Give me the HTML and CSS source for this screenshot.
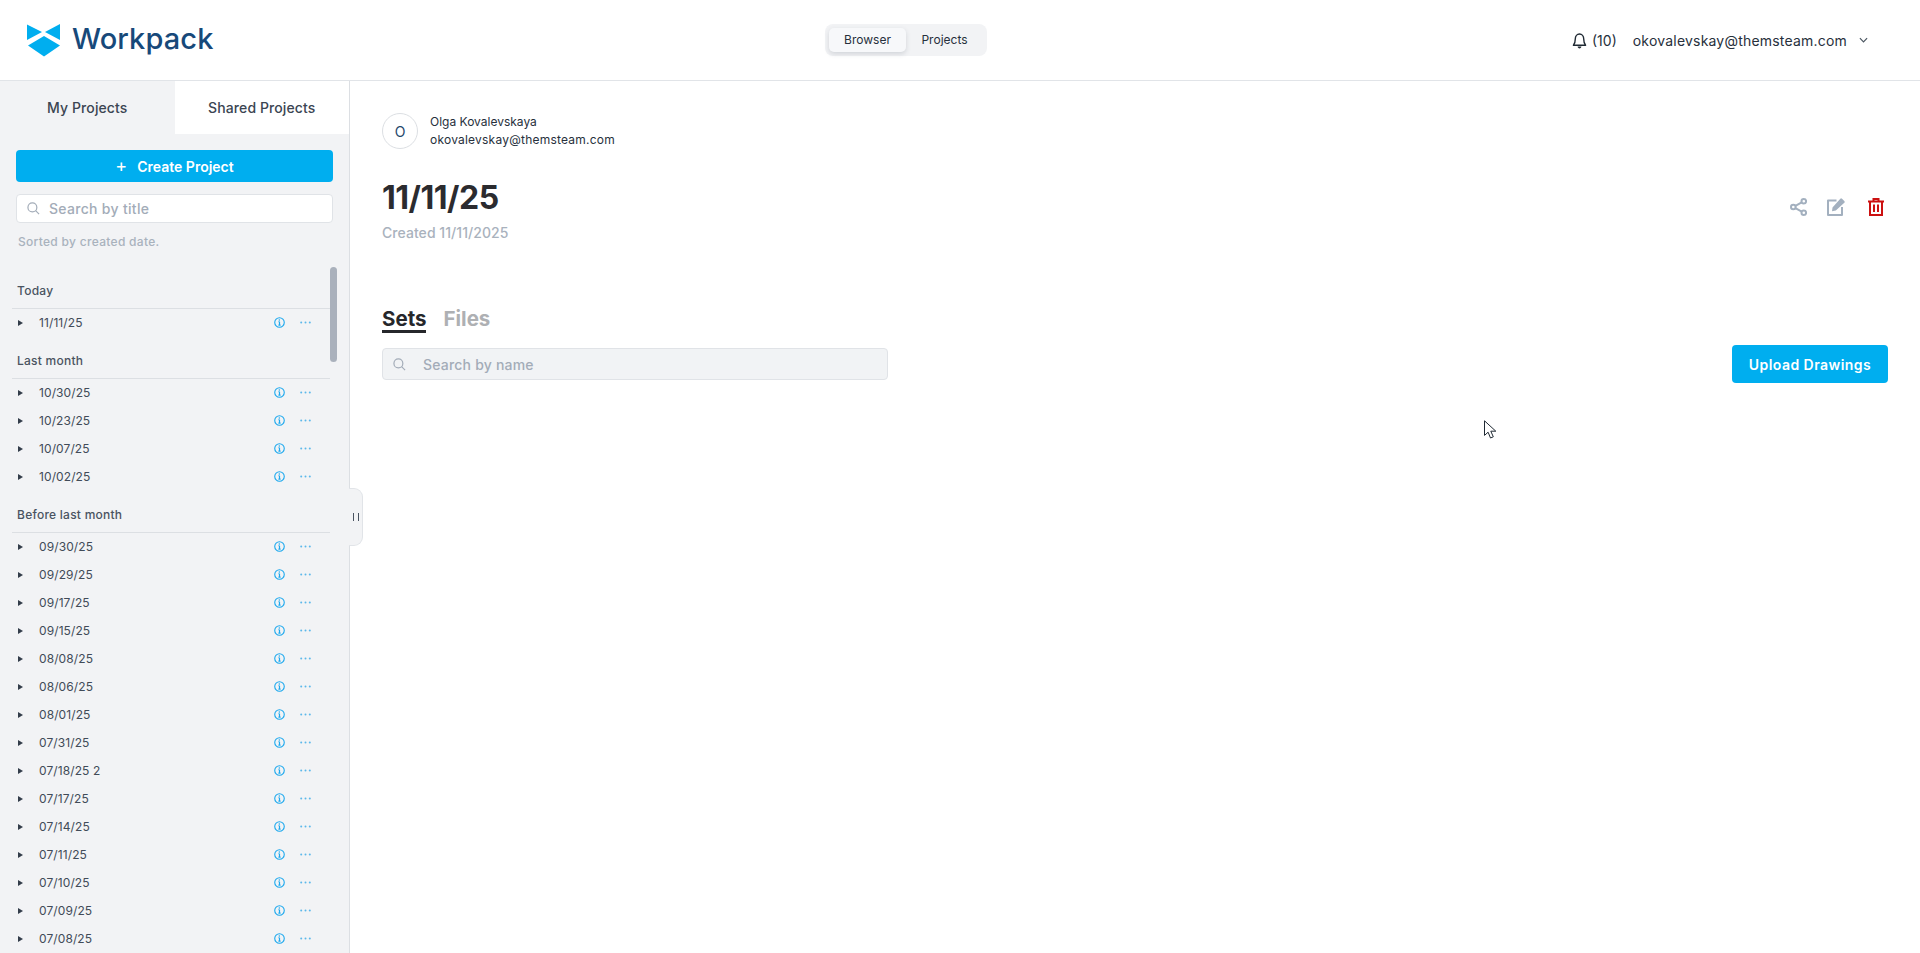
FILE: index.html
```html
<!DOCTYPE html>
<html lang="en">
<head>
<meta charset="utf-8">
<title>Workpack</title>
<link rel="stylesheet" href="styles.css">
</head>
<body>
<svg class="defs" width="0" height="0">
  <symbol id="i-info" viewBox="0 0 12 12"><circle cx="6" cy="6" r="5.200" fill="none" stroke="#1ca8ee" stroke-width="1.200"/><path stroke="#1ca8ee" stroke-width="1.300" d="M6 5.200v3.600M4.800 8.800h2.400M4.800 5.200H6"/><circle cx="5.800" cy="3.300" r=".8" fill="#1ca8ee"/></symbol>
  <symbol id="i-dots" viewBox="0 0 11 3"><g fill="#5cb8ea"><circle cx="1.200" cy="1.500" r="1"/><circle cx="5.500" cy="1.500" r="1"/><circle cx="9.800" cy="1.500" r="1"/></g></symbol>
  <symbol id="i-glass" viewBox="0 0 14 14"><circle cx="5.800" cy="5.800" r="4.800" fill="none" stroke="#a3acb8" stroke-width="1.300"/><path stroke="#a3acb8" stroke-width="1.300" d="M9.300 9.300 13 13"/></symbol>
</svg>
<header class="topbar">
  <div class="brand">
    <svg class="brand-mark" viewBox="0 0 34 34"><path fill="#00aeef" d="M0 1.500 15 9 0 17zM33 1 18 9 33 17zM17 13 1 22.500 17 33.500 33 22.500z"/></svg>
    <span class="brand-name">Workpack</span>
  </div>
  <div class="switch">
    <span class="switch-item active">Browser</span>
    <span class="switch-item">Projects</span>
  </div>
  <div class="user">
    <svg class="bell" viewBox="0 0 16 18"><path fill="none" stroke="#1f2933" stroke-width="1.500" stroke-linejoin="round" d="M1.500 14h13c-1.500-1.500-2-2.500-2-6.500 0-3-2-5.500-4.500-5.500S3.500 4.500 3.500 7.500c0 4-.5 5-2 6.500z"/><path fill="#1f2933" d="M6 15.500h4c0 1.200-.9 2-2 2s-2-.8-2-2z"/></svg>
    <span class="count">(10)</span>
    <span class="user-mail">okovalevskay@themsteam.com</span>
    <svg class="chev" viewBox="0 0 10 6"><path fill="none" stroke="#4a5560" stroke-width="1.300" d="M1 1l4 4 4-4"/></svg>
  </div>
</header>
<div class="layout">
  <aside class="sidebar">
    <div class="tabs">
      <div class="tab current">My Projects</div>
      <div class="tab">Shared Projects</div>
    </div>
    <div class="side-tools">
      <button class="btn-create"><span class="plus">+</span>Create Project</button>
      <div class="side-search">
        <svg class="glass"><use href="#i-glass"/></svg>
        <span>Search by title</span>
      </div>
      <div class="sorted">Sorted by created date.</div>
    </div>
    <div class="list">
      <div class="group-head">Today</div>
      <div class="row"><span class="tri"></span><span class="row-name">11/11/25</span><svg class="info"><use href="#i-info"/></svg><svg class="dots"><use href="#i-dots"/></svg></div>
      <div class="group-head">Last month</div>
      <div class="row"><span class="tri"></span><span class="row-name">10/30/25</span><svg class="info"><use href="#i-info"/></svg><svg class="dots"><use href="#i-dots"/></svg></div>
      <div class="row"><span class="tri"></span><span class="row-name">10/23/25</span><svg class="info"><use href="#i-info"/></svg><svg class="dots"><use href="#i-dots"/></svg></div>
      <div class="row"><span class="tri"></span><span class="row-name">10/07/25</span><svg class="info"><use href="#i-info"/></svg><svg class="dots"><use href="#i-dots"/></svg></div>
      <div class="row"><span class="tri"></span><span class="row-name">10/02/25</span><svg class="info"><use href="#i-info"/></svg><svg class="dots"><use href="#i-dots"/></svg></div>
      <div class="group-head">Before last month</div>
      <div class="row"><span class="tri"></span><span class="row-name">09/30/25</span><svg class="info"><use href="#i-info"/></svg><svg class="dots"><use href="#i-dots"/></svg></div>
      <div class="row"><span class="tri"></span><span class="row-name">09/29/25</span><svg class="info"><use href="#i-info"/></svg><svg class="dots"><use href="#i-dots"/></svg></div>
      <div class="row"><span class="tri"></span><span class="row-name">09/17/25</span><svg class="info"><use href="#i-info"/></svg><svg class="dots"><use href="#i-dots"/></svg></div>
      <div class="row"><span class="tri"></span><span class="row-name">09/15/25</span><svg class="info"><use href="#i-info"/></svg><svg class="dots"><use href="#i-dots"/></svg></div>
      <div class="row"><span class="tri"></span><span class="row-name">08/08/25</span><svg class="info"><use href="#i-info"/></svg><svg class="dots"><use href="#i-dots"/></svg></div>
      <div class="row"><span class="tri"></span><span class="row-name">08/06/25</span><svg class="info"><use href="#i-info"/></svg><svg class="dots"><use href="#i-dots"/></svg></div>
      <div class="row"><span class="tri"></span><span class="row-name">08/01/25</span><svg class="info"><use href="#i-info"/></svg><svg class="dots"><use href="#i-dots"/></svg></div>
      <div class="row"><span class="tri"></span><span class="row-name">07/31/25</span><svg class="info"><use href="#i-info"/></svg><svg class="dots"><use href="#i-dots"/></svg></div>
      <div class="row"><span class="tri"></span><span class="row-name">07/18/25 2</span><svg class="info"><use href="#i-info"/></svg><svg class="dots"><use href="#i-dots"/></svg></div>
      <div class="row"><span class="tri"></span><span class="row-name">07/17/25</span><svg class="info"><use href="#i-info"/></svg><svg class="dots"><use href="#i-dots"/></svg></div>
      <div class="row"><span class="tri"></span><span class="row-name">07/14/25</span><svg class="info"><use href="#i-info"/></svg><svg class="dots"><use href="#i-dots"/></svg></div>
      <div class="row"><span class="tri"></span><span class="row-name">07/11/25</span><svg class="info"><use href="#i-info"/></svg><svg class="dots"><use href="#i-dots"/></svg></div>
      <div class="row"><span class="tri"></span><span class="row-name">07/10/25</span><svg class="info"><use href="#i-info"/></svg><svg class="dots"><use href="#i-dots"/></svg></div>
      <div class="row"><span class="tri"></span><span class="row-name">07/09/25</span><svg class="info"><use href="#i-info"/></svg><svg class="dots"><use href="#i-dots"/></svg></div>
      <div class="row"><span class="tri"></span><span class="row-name">07/08/25</span><svg class="info"><use href="#i-info"/></svg><svg class="dots"><use href="#i-dots"/></svg></div>
    </div>
    <div class="scroll-thumb"></div>
    <div class="collapse"><i></i><i></i></div>
  </aside>
  <main class="main">
    <div class="owner">
      <div class="avatar">O</div>
      <div class="owner-text">
        <div>Olga Kovalevskaya</div>
        <div class="owner-mail">okovalevskay@themsteam.com</div>
      </div>
    </div>
    <div class="title-row">
      <div>
        <h1>11/11/25</h1>
        <div class="created">Created 11/11/2025</div>
      </div>
      <div class="actions">
        <svg class="a-share" viewBox="0 0 17 18"><g fill="none" stroke="#a3b0bf" stroke-width="2"><circle cx="13.800" cy="3.300" r="2.300"/><circle cx="13.800" cy="14.700" r="2.300"/><circle cx="3.300" cy="9" r="2.300"/><path d="M5.400 7.900 11.700 4.400M5.400 10.100 11.700 13.600"/></g></svg>
        <svg class="a-edit" viewBox="0 0 18 18"><path fill="none" stroke="#a3b0bf" stroke-width="2" stroke-linejoin="round" d="M9.500 2.500H1v14.500h14V9"/><path fill="#a3b0bf" d="M5.500 9.500 13.300.8a1.200 1.200 0 0 1 1.700 0l2.300 2.300a1.200 1.200 0 0 1 0 1.700L8.800 12.500l-3.800.7z"/></svg>
        <svg class="a-trash" viewBox="0 0 16 18"><path fill="none" stroke="#cc1111" stroke-width="2" d="M0 3.500h16M2 3.500V17h12V3.500M5.500 3.500V1h5v2.500M6 6.500v7.500M10 6.500v7.500"/></svg>
      </div>
    </div>
    <div class="content-tabs">
      <span class="ctab on">Sets</span>
      <span class="ctab">Files</span>
    </div>
    <div class="tools">
      <div class="main-search">
        <svg class="glass"><use href="#i-glass"/></svg>
        <span>Search by name</span>
      </div>
      <button class="btn-upload">Upload Drawings</button>
    </div>
    <svg class="cursor" viewBox="0 0 13 19"><path fill="#fff" stroke="#1f2933" d="M.5.800v14.600l3.600-3.200 2.400 5.800 2.800-1.200-2.500-5.600h5z"/></svg>
  </main>
</div>
</body>
</html>
```
FILE: styles.css
```css
* { box-sizing: border-box; }
html, body { margin: 0; height: 100%; }
body {
  font-family: Inter, "Open Sans", sans-serif;
  color: #2b3340;
  background: #fff;
  overflow: hidden;
  display: flex;
  flex-direction: column;
}
.defs { position: absolute; }
.topbar {
  height: 81px;
  flex: none;
  border-bottom: 1px solid #e1e4e8;
  display: grid;
  grid-template-columns: 798px 162px 1fr;
  align-items: center;
  padding: 0 52px 0 27px;
}
.brand { display: flex; align-items: center; gap: 11px; }
.brand-mark { width: 34px; height: 34px; }
.brand-name {
  font-size: 29px;
  line-height: 34px;
  font-weight: 500;
  color: #17497a;
  letter-spacing: 0.1px;
  padding-bottom: 2px;
}
.switch {
  display: flex;
  background: #f2f3f5;
  border-radius: 8px;
  padding: 4px;
  height: 32px;
  width: 162px;
  font-size: 12px;
}
.switch-item {
  width: 77px;
  text-align: center;
  line-height: 24px;
  border-radius: 5px;
  color: #27303c;
}
.switch-item.active {
  background: #f7f8fa;
  box-shadow: 0 2px 5px rgba(60, 70, 90, .18);
}
.user {
  display: flex;
  align-items: center;
  justify-content: flex-end;
  font-size: 14px;
  color: #27303c;
}
.bell { width: 15px; height: 17px; margin-right: 5px; }
.count { margin-right: 16px; }
.user-mail { margin-right: 12px; letter-spacing: 0.2px; }
.chev { width: 9px; height: 6px; }
.layout { flex: 1; display: flex; min-height: 0; }
.sidebar {
  width: 350px;
  flex: none;
  background: #f2f3f5;
  border-right: 1px solid #dcdfe3;
  display: flex;
  flex-direction: column;
  position: relative;
}
.tabs { display: flex; height: 53px; flex: none; }
.tab {
  flex: 1;
  display: flex;
  align-items: center;
  justify-content: center;
  padding-bottom: 1px;
  font-size: 14px;
  font-weight: 500;
  letter-spacing: 0.1px;
  color: #3b4552;
  background: #fff;
}
.tab.current { background: #f2f3f5; }
.side-tools { padding: 16px 16px 0; height: 133px; flex: none; }
.btn-create {
  width: 317px;
  height: 32px;
  border: 0;
  border-radius: 4px;
  background: #00aeef;
  color: #fff;
  font: 600 14px Inter, sans-serif;
  display: flex;
  align-items: center;
  justify-content: center;
}
.plus { font-size: 18px; font-weight: 400; margin-right: 10px; line-height: 1; }
.side-search {
  margin-top: 12px;
  height: 29px;
  border: 1px solid #e0e3e7;
  border-radius: 4px;
  background: #fff;
  display: flex;
  align-items: center;
  padding-left: 10px;
  font-size: 14px;
  font-weight: 500;
  letter-spacing: 0.3px;
  color: #a3acb8;
}
.glass { width: 13px; height: 13px; margin-right: 9px; flex: none; }
.sorted {
  margin: 12px 0 0 2px;
  font-size: 12px;
  font-weight: 500;
  letter-spacing: 0.3px;
  line-height: 14px;
  color: #a9b2bd;
}
.list { flex: 1; overflow: hidden; padding: 0 19px 0 12px; }
.group-head {
  padding: 15px 0 8px 5px;
  line-height: 18px;
  font-size: 12px;
  font-weight: 500;
  letter-spacing: 0.25px;
  color: #4a5361;
  border-bottom: 1px solid #dcdfe3;
}
.row {
  height: 28px;
  display: flex;
  align-items: center;
  padding: 0 0 2px 6px;
  font-size: 12px;
  letter-spacing: 0.1px;
  color: #414b58;
}
.tri {
  width: 0;
  height: 0;
  margin: 2px 16px 0 0;
  border-left: 5px solid #333d4a;
  border-top: 3.500px solid transparent;
  border-bottom: 3.500px solid transparent;
}
.row-name { flex: 1; }
.info { width: 11px; height: 11px; margin-right: 15px; }
.dots { width: 11px; height: 3px; margin-right: 19px; }
.scroll-thumb {
  position: absolute;
  left: 330px;
  top: 186px;
  width: 7px;
  height: 95px;
  border-radius: 4px;
  background: #aab1bc;
}
.collapse {
  position: absolute;
  left: 349px;
  top: 407px;
  width: 14px;
  height: 58px;
  background: #f2f3f5;
  border: 1px solid #e1e4e8;
  border-left: 0;
  border-radius: 0 9px 9px 0;
  display: flex;
  align-items: center;
  justify-content: center;
  gap: 4px;
}
.collapse i { width: 1px; height: 8px; background: #4a5361; }
.main { flex: 1; padding: 32px 32px 0 32px; position: relative; min-width: 0; }
.owner { display: flex; align-items: center; gap: 12px; }
.avatar {
  width: 36px;
  height: 36px;
  border-radius: 50%;
  border: 1px solid #dcdfe3;
  display: flex;
  align-items: center;
  justify-content: center;
  font-size: 14px;
  color: #24466b;
}
.owner-text { font-size: 12px; line-height: 18px; color: #27303c; }
.owner-mail { letter-spacing: 0.22px; }
.title-row {
  margin-top: 29px;
  display: flex;
  justify-content: space-between;
  align-items: center;
}
h1 { margin: 0; font-size: 32px; line-height: 40px; font-weight: 700; color: #2b2b2f; letter-spacing: -0.5px; }
.created { margin-top: 6px; font-size: 14px; line-height: 18px; font-weight: 500; color: #a9b2bd; letter-spacing: 0.05px; }
.actions { display: flex; align-items: center; gap: 20px; margin-right: 4px; margin-top: -6px; }
.a-share { width: 17px; height: 18px; }
.a-edit { width: 18px; height: 18px; }
.a-trash { width: 16px; height: 18px; margin-left: 3px; }
.content-tabs { margin-top: 65px; display: flex; gap: 17px; }
.ctab {
  font-size: 20.500px;
  line-height: 23px;
  font-weight: 700;
  color: #aeb0b3;
  border-bottom: 3px solid transparent;
}
.ctab.on { color: #26272b; border-bottom-color: #26272b; }
.tools {
  margin-top: 12px;
  display: flex;
  justify-content: space-between;
  align-items: center;
}
.main-search {
  width: 506px;
  height: 32px;
  background: #f1f3f5;
  border: 1px solid #e0e3e7;
  border-radius: 4px;
  display: flex;
  align-items: center;
  padding-left: 10px;
  font-size: 14px;
  font-weight: 500;
  letter-spacing: 0.2px;
  color: #a3acb8;
}
.main-search .glass { margin-right: 17px; }
.btn-upload {
  width: 156px;
  height: 38px;
  border: 0;
  border-radius: 4px;
  background: #00aeef;
  color: #fff;
  font: 600 14px Inter, sans-serif;
  letter-spacing: 0.45px;
}
.cursor { position: absolute; left: 1134px; top: 339px; width: 13px; height: 19px; }
```
